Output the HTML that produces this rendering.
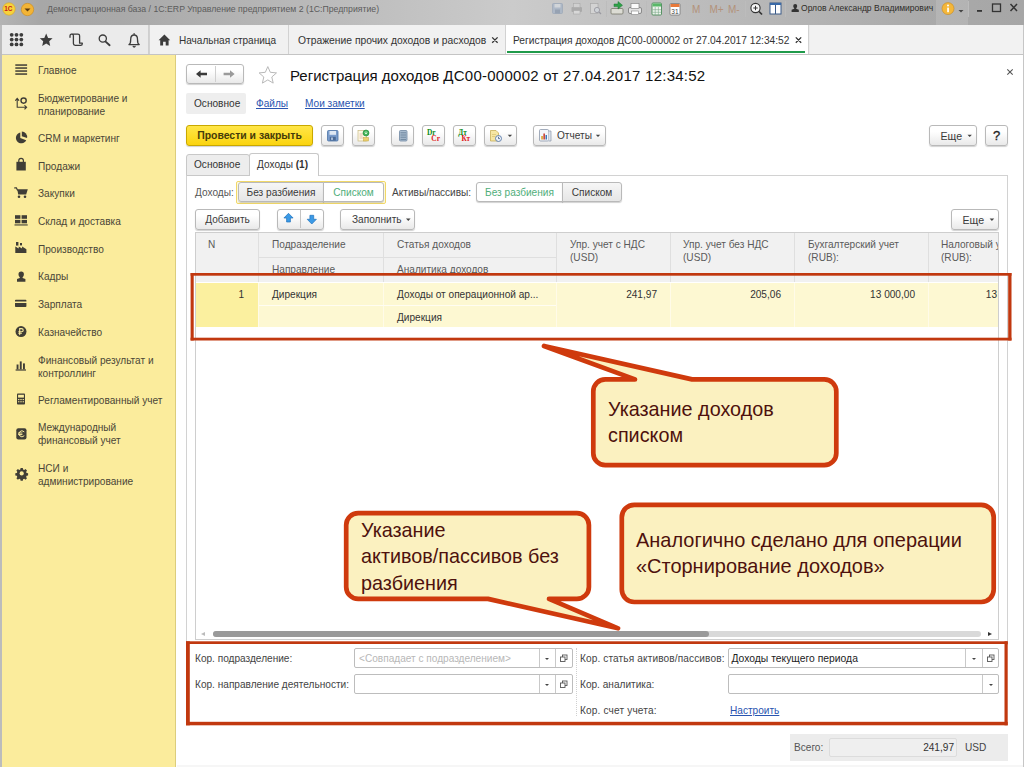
<!DOCTYPE html>
<html><head><meta charset="utf-8">
<style>
*{box-sizing:border-box;margin:0;padding:0}
html,body{width:1024px;height:767px;overflow:hidden;background:#fff;font-family:"Liberation Sans",sans-serif;font-size:10.1px;color:#3a3a3a}
div,span,svg{position:absolute}
.t{white-space:nowrap;line-height:13px}
#titlebar{left:0;top:0;width:1024px;height:25px;background:linear-gradient(90deg,#b4b4b4 0,#a7a7a7 4%,#a9a9a9 12%,#cbcbcb 50%,#aaaaaa 90%,#a6a6a6 100%)}
#toolrow{left:0;top:25px;width:1024px;height:30px;background:#ebebeb;border-bottom:1px solid #c4c4c4}
#leftedge{left:0;top:25px;width:2px;height:742px;background:#bcbcbc}
#rightedge{left:1023px;top:25px;width:1px;height:742px;background:#c6c6c6}
#sidebar{left:2px;top:55px;width:174px;height:712px;background:#fbec9c}
#sidebar .t{left:36px;color:#4a4638}
.tab{top:25px;height:29px;background:#f1f1f1;border-left:1px solid #d2d2d2;color:#333;line-height:31px;white-space:nowrap;font-size:10.2px}
.btn{height:21px;border:1px solid #b9b9b9;border-radius:3px;background:linear-gradient(#ffffff 30%,#e9e9e9);color:#3a3a3a;line-height:20px;text-align:center;white-space:nowrap;box-shadow:0 1px 1px rgba(0,0,0,.18)}
.hdr{color:#5a5a5a;white-space:nowrap;line-height:13px}
.cell{color:#333;white-space:nowrap;line-height:13px}
.inp{height:20px;border:1px solid #bdbdbd;border-radius:2px;background:#fff}
.vs{width:1px;background:#c6c6c6;top:0;height:18px}
.arr{width:0;height:0;border-left:2.5px solid transparent;border-right:2.5px solid transparent;border-top:2.5px solid #444;margin:.5px 0 0 .5px}
.co{font-size:19.8px;color:#4e110d;line-height:26.3px;white-space:nowrap}
</style></head><body>
<!-- TITLE BAR -->
<div id="titlebar">
 <svg style="left:2px;top:2px" width="40" height="16" viewBox="0 0 40 16">
  <circle cx="7" cy="7" r="6.2" fill="#f7d23c" stroke="#d9a520" stroke-width=".6"/>
  <text x="2.2" y="9.4" font-family="Liberation Sans" font-size="6.5" font-weight="bold" fill="#c8201a">1С</text>
  <circle cx="25.5" cy="7.5" r="6.2" fill="#f2b436" stroke="#c98a1d" stroke-width=".6"/>
  <path d="M22.5 6.5h6l-3 3z" fill="#5a3a10"/>
 </svg>
 <div class="t" style="left:47px;top:3px;font-size:8.72px;color:#5c5c5c">Демонстрационная база / 1С:ERP Управление предприятием 2 (1С:Предприятие)</div>
 
 <div style="left:936px;top:0;width:32px;height:25px;background:rgba(255,255,255,.13)"></div>
 <div class="t" style="left:801px;top:2px;font-size:8.55px;color:#2e2c28">Орлов Александр Владимирович</div>
</div>

<svg style="left:540px;top:0" width="484" height="25" viewBox="540 0 484 25">
 <g opacity=".45">
  <rect x="552.500" y="3.500" width="10" height="10" rx="1" fill="#8fa6c6" stroke="#6d86a8" stroke-width=".8"/><rect x="554.500" y="4" width="6" height="3.500" fill="#dfe6ef"/><rect x="555" y="9.500" width="5" height="4" fill="#5c769a"/>
  <rect x="571.500" y="7" width="10.500" height="5" rx="1" fill="#8a8a8a"/><rect x="573.500" y="3.500" width="6.500" height="4" fill="#ddd" stroke="#888" stroke-width=".6"/><rect x="573.500" y="10.500" width="6.500" height="3.500" fill="#eee" stroke="#888" stroke-width=".6"/>
  <rect x="590.500" y="3.500" width="7.500" height="10" fill="#e6e6e6" stroke="#888" stroke-width=".7"/><circle cx="597" cy="10" r="2.600" fill="#dde6f0" stroke="#667" stroke-width=".9"/><path d="M599 12 l2 2" stroke="#667" stroke-width="1.200"/>
 </g>
 <g stroke="#bcbcbc" stroke-width="1"><path d="M606.500 1 v16 M646.500 1 v16 M686.500 1 v16 M745.500 1 v16 M785.500 1 v16 M968.500 1 v16"/></g>
 <!-- send -->
 <rect x="611" y="8.500" width="12" height="5.500" rx="1" fill="#dcdcd4" stroke="#77776a" stroke-width=".8"/>
 <path d="M614 6.500 h4 v-2.500 l4.500 3.800 -4.500 3.800 v-2.500 h-4z" fill="#2fa048" stroke="#187830" stroke-width=".5" transform="translate(0,-2.500)"/>
 <!-- printer -->
 <rect x="628.500" y="7.500" width="13" height="6" rx="1.500" fill="#e4e4e4" stroke="#777" stroke-width=".8"/><rect x="631" y="3.500" width="8" height="5" fill="#fafafa" stroke="#888" stroke-width=".7"/><rect x="631.500" y="11" width="7" height="3.500" fill="#fff" stroke="#888" stroke-width=".6"/>
 <!-- calc -->
 <rect x="652" y="3" width="9.500" height="12" rx="1" fill="#eef4ee" stroke="#4a8a58" stroke-width=".9"/><rect x="652.500" y="3.500" width="8.500" height="3" fill="#58b868"/>
 <path d="M655.200 7 v8 M658.400 7 v8 M652.500 9.700 h8.500 M652.500 12.300 h8.500" stroke="#7aa888" stroke-width=".6"/>
 <!-- calendar -->
 <rect x="670" y="3.500" width="10" height="11.500" rx="1" fill="#fff" stroke="#777" stroke-width=".8"/><rect x="670.500" y="4" width="9" height="3" fill="#e8793a"/>
 <text x="671.300" y="13.600" font-family="Liberation Sans" font-size="6.500" fill="#444">31</text>
 <!-- M M+ M- -->
 <g font-family="Liberation Sans" font-size="10" fill="#b3927a"><text x="692" y="13">M</text><text x="709.500" y="13">M+</text><text x="728" y="13">M-</text></g>
 <!-- zoom -->
 <circle cx="755.500" cy="8" r="4.600" fill="#f6f6f6" stroke="#333" stroke-width="1.100"/><path d="M753.300 8 h4.400 M755.500 5.800 v4.400" stroke="#333" stroke-width="1"/><path d="M759 11.500 l3 3" stroke="#333" stroke-width="1.700"/>
 <!-- panels -->
 <rect x="770" y="3" width="11" height="11" fill="#fff" stroke="#3a5a88" stroke-width="1"/><rect x="770" y="3" width="11" height="2" fill="#3a6aa8"/><path d="M775.500 5 v9" stroke="#3a5a88" stroke-width="1"/>
 <!-- user -->
 <path d="M795.200 4 a2 2 0 0 1 2 2 c0 1 -.4 1.700 -1 2.200 v.6 l2.600 .9 v2.300 h-7.200 v-2.300 l2.600 -.9 v-.6 c-.6 -.5 -1 -1.200 -1 -2.200 a2 2 0 0 1 2 -2z" fill="#333"/>
 <!-- info -->
 <circle cx="948" cy="8.600" r="6" fill="#f4b73a" stroke="#c98a1d" stroke-width=".6"/>
 <rect x="947.200" y="7.600" width="1.700" height="4.600" fill="#fff"/><circle cx="948" cy="5.600" r="1" fill="#fff"/>
 <path d="M958.500 10 h5 l-2.500 2.600z" fill="#444"/>
 <rect x="977" y="10" width="5" height="1.800" fill="#333"/>
 <rect x="992.500" y="4" width="8" height="7.500" fill="none" stroke="#333" stroke-width="1.300"/>
 <path d="M1010.500 4 l6.500 7 M1017 4 l-6.500 7" stroke="#333" stroke-width="1.500"/>
</svg>
<div id="toolrow"></div>
<div id="leftedge"></div>
<div id="rightedge"></div>

<!-- TOOLROW ICONS -->
<svg style="left:0;top:25px" width="180" height="30" viewBox="0 0 180 30">
 <g fill="#3c3c3c">
  <g id="dots"><circle cx="11.7" cy="9.8" r="1.9"/><circle cx="16.5" cy="9.8" r="1.9"/><circle cx="21.3" cy="9.8" r="1.9"/>
  <circle cx="11.7" cy="14.6" r="1.9"/><circle cx="16.5" cy="14.6" r="1.9"/><circle cx="21.3" cy="14.6" r="1.9"/>
  <circle cx="11.7" cy="19.4" r="1.9"/><circle cx="16.5" cy="19.4" r="1.9"/><circle cx="21.3" cy="19.4" r="1.9"/></g>
  <path d="M46.2 8.6 l1.9 4.3 4.5 .4 -3.4 3 1 4.6 -4 -2.5 -4 2.5 1 -4.6 -3.4 -3 4.5 -.4z"/>
 </g>
 <g fill="none" stroke="#3c3c3c" stroke-width="1.3" stroke-linecap="round" stroke-linejoin="round">
  <path d="M70 12.3 V10.8 a1.7 1.7 0 0 1 3.4 0 V18.6 a1.8 1.8 0 0 0 1.8 1.8 H80.6 a1.7 1.7 0 0 0 1.7 -1.7 V18.2 H79.6 V10.8 a1.7 1.7 0 0 0 -1.7 -1.7 H71.8"/>
  <circle cx="102.8" cy="13.6" r="3.6"/>
  <path d="M105.6 16.6 L109.6 20.2" stroke-width="1.9"/>
  <path d="M129 19.6 h10.2 c-1.5 -1 -1.7 -2.6 -1.7 -5.2 c0 -2.8 -1.4 -4.4 -3.4 -4.4 s-3.4 1.6 -3.4 4.4 c0 2.6 -.2 4.2 -1.7 5.2z M133.2 21.3 a1 1 0 0 0 1.9 0 M134.1 9.6 V8.6"/>
 </g>
</svg>
<div style="left:148px;top:25px;width:1px;height:29px;background:#cfcfcf"></div>
<div style="left:810px;top:25px;width:213px;height:29px;background:#f2f2f2"></div>
<!-- TABS -->
<div class="tab" style="left:149px;width:139px;padding-left:29px;font-size:10.05px">Начальная страница</div>
<div class="tab" style="left:288px;width:217px;padding-left:9px;font-size:10.32px">Отражение прочих доходов и расходов</div>
<div class="tab" style="left:505px;width:304px;padding-left:7px;font-size:10.2px;background:#fff;border-right:1px solid #d2d2d2">Регистрация доходов ДС00-000002 от 27.04.2017 12:34:52</div>
<div style="left:507px;top:50.5px;width:298px;height:2.5px;background:#1f9a4a"></div>
<svg style="left:0;top:25px" width="180" height="30" viewBox="0 0 180 30"><g fill="#3c3c3c"><path d="M158.6 15.2 L164.4 9.6 L170.2 15.2 H168.6 V20.4 H165.7 V16.8 H163.1 V20.4 H160.2 V15.2 Z"/></g></svg>
<!-- SIDEBAR -->
<div id="sidebar">
<div class="t" style="top:8.8px">Главное</div>
<div class="t" style="top:36.8px">Бюджетирование и<br>планирование</div>
<div class="t" style="top:76.8px">CRM и маркетинг</div>
<div class="t" style="top:104.8px">Продажи</div>
<div class="t" style="top:131.8px">Закупки</div>
<div class="t" style="top:159.8px">Склад и доставка</div>
<div class="t" style="top:187.8px">Производство</div>
<div class="t" style="top:214.8px">Кадры</div>
<div class="t" style="top:242.8px">Зарплата</div>
<div class="t" style="top:270.8px">Казначейство</div>
<div class="t" style="top:298.8px">Финансовый результат и<br>контроллинг</div>
<div class="t" style="top:338.8px">Регламентированный учет</div>
<div class="t" style="top:366.3px">Международный<br>финансовый учет</div>
<div class="t" style="top:406.8px">НСИ и<br>администрирование</div>
</div>

<svg style="left:0;top:0" width="40" height="500" viewBox="0 0 40 500">
 <g fill="#403e36">
  <!-- hamburger -->
  <rect x="15.3" y="64.3" width="11.8" height="1.5"/><rect x="15.3" y="67.3" width="11.8" height="1.5"/><rect x="15.3" y="70.3" width="11.8" height="1.5"/><rect x="15.3" y="73.3" width="11.8" height="1.5"/>
  <!-- pie -->
  <path d="M20.3 132.6 a5.4 5.4 0 1 0 5.9 7.6 l-5.9 -2.2z"/><path d="M21.8 131.6 a5.6 5.6 0 0 1 5.3 6.4 l-5.3 -1.7z"/>
  <!-- bag -->
  <path d="M16.4 161.8 h9.4 v8.7 h-9.4z"/>
  <!-- cart -->
  <path d="M17.2 189.2 h10.6 l-1.6 5.2 h-8z"/><circle cx="19" cy="196.8" r="1.3"/><circle cx="25" cy="196.8" r="1.3"/>
  <!-- warehouse -->
  <rect x="15" y="215.2" width="5.4" height="3.6"/><rect x="21.6" y="215.2" width="5.4" height="3.6"/><rect x="15" y="219.9" width="5.4" height="3.4"/><rect x="21.6" y="219.9" width="5.4" height="3.4"/><rect x="14.5" y="224.4" width="13.2" height="1.1"/>
  <!-- factory -->
  <path d="M15.3 253 v-6.6 l3.4 2.2 v-2.2 l3.4 2.2 v-2.2 l4.3 2.8 v3.8z"/><rect x="16" y="242" width="2.4" height="3.6"/><rect x="20" y="243" width="2" height="2.4"/>
  <!-- person -->
  <path d="M21.2 271.6 a2.7 2.7 0 0 1 2.7 2.7 c0 1.4 -.6 2.4 -1.3 3 v.8 l2.8 1 v2.7 h-8.4 v-2.7 l2.8 -1 v-.8 c-.7 -.6 -1.3 -1.6 -1.3 -3 a2.7 2.7 0 0 1 2.7 -2.7z"/>
  <!-- card -->
  <path d="M15 300.5 a.8 .8 0 0 1 .8 -.8 h9.8 a.8 .8 0 0 1 .8 .8 v1 h-11.4z M15 303 h11.400 v3.2 a.8 .8 0 0 1 -.8 .8 h-9.8 a.8 .8 0 0 1 -.8 -.8z"/>
  <!-- ruble -->
  <circle cx="21" cy="331.6" r="5.5"/>
  <!-- bars -->
  <rect x="15.6" y="369.4" width="10.4" height="1.2"/><rect x="16.6" y="364.5" width="1.9" height="4.9"/><rect x="19.8" y="361.4" width="1.9" height="8"/><rect x="23" y="363.4" width="1.9" height="6"/>
  <!-- calc -->
  <path d="M17 394.4 a.8 .8 0 0 1 .8 -.8 h6.400 a.8 .8 0 0 1 .8 .8 v9.3 a.8 .8 0 0 1 -.8 .8 h-6.400 a.8 .8 0 0 1 -.8 -.8z"/>
  <!-- euro -->
  <rect x="16.3" y="428.2" width="10.2" height="11.2" rx="2"/>
  <!-- gear -->
  <path d="M20.600 468 h2.200 l.3 1.500 1.100 .5 1.300 -.9 1.500 1.500 -.9 1.300 .5 1.100 1.500 .3 v2.200 l-1.500 .3 -.5 1.100 .9 1.300 -1.500 1.500 -1.300 -.9 -1.100 .5 -.3 1.500 h-2.200 l-.3 -1.500 -1.100 -.5 -1.300 .9 -1.500 -1.500 .9 -1.300 -.5 -1.100 -1.500 -.3 v-2.200 l1.500 -.3 .5 -1.100 -.9 -1.300 1.500 -1.500 1.300 .9 1.100 -.5z"/>
 </g>
 <g fill="#fbec9c">
  <circle cx="21.7" cy="473.4" r="2.1"/>
  <rect x="18.100" y="394.800" width="5.800" height="2.800"/>
  <rect x="18.1" y="399" width="1.300" height="1.100"/><rect x="20.35" y="399" width="1.300" height="1.100"/><rect x="22.600" y="399" width="1.300" height="1.100"/>
  <rect x="18.1" y="401.200" width="1.300" height="1.100"/><rect x="20.35" y="401.200" width="1.300" height="1.100"/><rect x="22.600" y="401.200" width="1.300" height="1.100"/>
 </g>
 <g fill="none" stroke="#403e36" stroke-linecap="round">
  <path d="M18.800 162 v-1.400 a2.300 2.300 0 0 1 4.600 0 v1.400" stroke-width="1.200"/>
  <path d="M14.700 187.900 h1.700 l1 2.200" stroke-width="1.200"/>
  <!-- budget icon -->
  <path d="M17.200 98.500 V107.300 H26.500 M15.600 100.300 l1.600 -1.900 1.600 1.900 M24.800 105.600 l1.800 1.700 -1.800 1.700" stroke-width="1.100"/>
  <circle cx="23.600" cy="100.600" r="2.600" stroke-width="1.400"/>
 </g>
 <g fill="none" stroke="#fbec9c" stroke-width="1.100" stroke-linecap="round">
  <path d="M19.700 334.600 v-6 h1.900 a1.600 1.600 0 0 1 0 3.200 h-2.800 M18.800 333.300 h2.600"/>
  <path d="M24 431.600 a3 3 0 1 0 0 4.400 M18.600 433 h3.400 M18.600 434.600 h3.400" stroke-width="1"/>
 </g>
</svg>
<div style="left:175px;top:55px;width:1px;height:712px;background:#dccd7c"></div>
<div style="left:177px;top:764.5px;width:846px;height:2.5px;background:#f6f6f6"></div>
<!-- CONTENT HEADER -->
<div class="btn" style="left:186px;top:64px;width:58px;height:20px"></div>
<div style="left:215px;top:66px;width:1px;height:16px;background:#d0d0d0"></div>
<div class="t" style="left:290px;top:67px;font-size:15px;line-height:18px;color:#111">Регистрация доходов <span style="position:static;letter-spacing:.25px">ДС00-000002 от 27.04.2017 12:34:52</span></div>
<div style="left:186px;top:93px;width:60px;height:21px;background:#eeeeee;border-radius:2px"></div>
<div class="t" style="left:194px;top:97px;color:#333">Основное</div>
<div class="t" style="left:256px;top:97px;color:#2a55b0;text-decoration:underline">Файлы</div>
<div class="t" style="left:305px;top:97px;color:#2a55b0;text-decoration:underline">Мои заметки</div>
<!-- COMMAND BAR -->
<div class="btn" style="left:186px;top:125px;width:127px;background:linear-gradient(#ffe648,#fbd40f);border-color:#c9a800;font-weight:bold;font-size:10.45px;color:#453b0a">Провести и закрыть</div>
<div class="btn" style="left:321px;top:125px;width:23px"></div>
<div class="btn" style="left:352px;top:125px;width:23px"></div>
<div class="btn" style="left:391px;top:125px;width:23px"></div>
<div class="btn" style="left:422px;top:125px;width:23px"></div>
<div class="btn" style="left:453px;top:125px;width:23px"></div>
<div class="btn" style="left:484px;top:125px;width:33px"></div>
<div class="btn" style="left:533px;top:125px;width:73px;text-align:left;padding-left:23px">Отчеты</div>
<div class="btn" style="left:929px;top:125px;width:48px;text-align:left;padding-left:10.5px;font-size:10.6px">Еще</div>
<div class="btn" style="left:985px;top:125px;width:23px;font-size:13px;color:#222;-webkit-text-stroke:.3px #222">?</div>

<!-- PAGE TABS -->
<div style="left:186px;top:175px;width:822px;height:470px;border:1px solid #d2d2d2;border-bottom:none;background:#fff"></div>
<div style="left:186px;top:154px;width:64px;height:22px;background:#ededed;border:1px solid #c8c8c8;border-radius:3px 3px 0 0"></div>
<div class="t" style="left:194px;top:158px;color:#333">Основное</div>
<div style="left:249px;top:153px;width:70px;height:23px;background:#fff;border:1px solid #c8c8c8;border-bottom:none;border-radius:3px 3px 0 0"></div>
<div class="t" style="left:257px;top:158px;color:#333">Доходы <b>(1)</b></div>
<!-- SWITCHES -->
<div class="t" style="left:195px;top:186px;color:#555">Доходы:</div>
<div style="left:236px;top:181px;width:150px;height:22.5px;border:1px solid #f1d868;border-radius:2px;background:#fffbe0"></div>
<div class="btn" style="left:238px;top:182px;width:86px;height:20px;border-radius:3px 0 0 3px;line-height:19px;background:linear-gradient(#f6f6f6,#e6e6e6)">Без разбиения</div>
<div class="btn" style="left:323px;top:182px;width:61px;height:20px;border-radius:0 3px 3px 0;line-height:19px;background:#fff;color:#4fae7a">Списком</div>
<div class="t" style="left:392px;top:186px;color:#444">Активы/пассивы:</div>
<div class="btn" style="left:476px;top:182px;width:87px;height:20px;border-radius:3px 0 0 3px;line-height:19px;background:#fff;color:#4fae7a">Без разбиения</div>
<div class="btn" style="left:562px;top:182px;width:60px;height:20px;border-radius:0 3px 3px 0;line-height:19px;background:linear-gradient(#f6f6f6,#e6e6e6)">Списком</div>
<!-- TABLE CMD -->
<div class="btn" style="left:195px;top:209px;width:65px;height:20.5px;line-height:20px">Добавить</div>
<div class="btn" style="left:277px;top:209px;width:47px;height:20.5px"></div>
<div style="left:300px;top:210px;width:1px;height:18px;background:#c4c4c4"></div>
<div class="btn" style="left:340px;top:209px;width:75px;height:20.5px;line-height:20px;text-align:left;padding-left:11px">Заполнить</div>
<div class="btn" style="left:951px;top:209px;width:48px;height:20.5px;line-height:20px;text-align:left;padding-left:10.5px;font-size:10.6px">Еще</div>
<!-- TABLE -->
<div id="table" style="left:195px;top:232px;width:804px;height:408px;border:1px solid #cecece;background:#fff"></div>
<div style="left:196px;top:233px;width:802px;height:49px;background:#f1f1f1"></div>

<!-- header grid lines -->
<div style="left:258px;top:233px;width:1px;height:49px;background:#dfdfdf"></div>
<div style="left:383px;top:233px;width:1px;height:49px;background:#dfdfdf"></div>
<div style="left:556px;top:233px;width:1px;height:49px;background:#dfdfdf"></div>
<div style="left:670px;top:233px;width:1px;height:49px;background:#dfdfdf"></div>
<div style="left:794px;top:233px;width:1px;height:49px;background:#dfdfdf"></div>
<div style="left:928px;top:233px;width:1px;height:49px;background:#dfdfdf"></div>
<div style="left:259px;top:257px;width:297px;height:1px;background:#dfdfdf"></div>
<div class="hdr" style="left:208px;top:238px">N</div>
<div class="hdr" style="left:272px;top:238px">Подразделение</div>
<div class="hdr" style="left:272px;top:263px">Направление</div>
<div class="hdr" style="left:397px;top:238px">Статья доходов</div>
<div class="hdr" style="left:397px;top:263px">Аналитика доходов</div>
<div class="hdr" style="left:570px;top:238px">Упр. учет с НДС<br>(USD)</div>
<div class="hdr" style="left:683px;top:238px">Упр. учет без НДС<br>(USD)</div>
<div class="hdr" style="left:808px;top:238px">Бухгалтерский учет<br>(RUB):</div>
<div class="hdr" style="left:941px;top:238px;width:57px;overflow:hidden">Налоговый учет<br>(RUB):</div>
<!-- data row -->
<div style="left:196px;top:283px;width:802px;height:44px;background:#fdf8d2"></div>
<div style="left:196px;top:283px;width:61.5px;height:44px;background:#fbf09f"></div>
<div style="left:258px;top:283px;width:1px;height:44px;background:#fffbe8"></div>
<div style="left:383px;top:283px;width:1px;height:44px;background:#fffbe8"></div>
<div style="left:556px;top:283px;width:1px;height:44px;background:#fffbe8"></div>
<div style="left:670px;top:283px;width:1px;height:44px;background:#fffbe8"></div>
<div style="left:794px;top:283px;width:1px;height:44px;background:#fffbe8"></div>
<div style="left:928px;top:283px;width:1px;height:44px;background:#fffbe8"></div>
<div style="left:259px;top:304.5px;width:297px;height:1px;background:#fffdf2"></div>
<div class="cell" style="left:200px;top:287.5px;width:44px;text-align:right">1</div>
<div class="cell" style="left:272px;top:287.5px">Дирекция</div>
<div class="cell" style="left:397px;top:287.5px">Доходы от операционной ар...</div>
<div class="cell" style="left:397px;top:310.5px">Дирекция</div>
<div class="cell" style="left:580px;top:287.5px;width:77px;text-align:right">241,97</div>
<div class="cell" style="left:700px;top:287.5px;width:81px;text-align:right">205,06</div>
<div class="cell" style="left:830px;top:287.5px;width:85px;text-align:right">13 000,00</div>
<div class="cell" style="left:960px;top:287.5px;width:37px;text-align:right">13</div>
<!-- scrollbar -->
<div style="left:196px;top:630px;width:802px;height:9px;background:#fff"></div>
<div style="left:213px;top:631px;width:768px;height:6px;background:#d9d9d9;border-radius:3px"></div>
<div style="left:213px;top:631px;width:496px;height:6px;background:#9a9a9a;border-radius:3px"></div>
<div style="left:201px;top:632px;width:0;height:0;border-top:2.5px solid transparent;border-bottom:2.5px solid transparent;border-right:4px solid #bbb"></div>
<div style="left:988px;top:632px;width:0;height:0;border-top:2.5px solid transparent;border-bottom:2.5px solid transparent;border-left:4px solid #333"></div>
<!-- BOTTOM FIELDS -->
<div style="left:576px;top:648px;width:0;height:68px;border-left:1px dotted #d0d0d0"></div>
<div class="t" style="left:195px;top:652px;color:#444">Кор. подразделение:</div>
<div class="t" style="left:195px;top:678px;color:#444">Кор. направление деятельности:</div>
<div class="inp" style="left:354px;top:648px;width:219px"></div>
<div class="t" style="left:359px;top:652px;color:#b8b8b8">&lt;Совпадает с подразделением&gt;</div>
<div style="left:539px;top:649px;width:1px;height:18px;background:#c9c9c9"></div>
<div style="left:555px;top:649px;width:1px;height:18px;background:#c9c9c9"></div>
<div class="arr" style="left:544px;top:657px"></div>
<div class="inp" style="left:354px;top:674px;width:219px"></div>
<div style="left:539px;top:675px;width:1px;height:18px;background:#c9c9c9"></div>
<div style="left:555px;top:675px;width:1px;height:18px;background:#c9c9c9"></div>
<div class="arr" style="left:544px;top:683px"></div>
<div class="t" style="left:580px;top:652px;color:#444;letter-spacing:.12px">Кор. статья активов/пассивов:</div>
<div class="t" style="left:580px;top:678px;color:#444">Кор. аналитика:</div>
<div class="t" style="left:580px;top:704px;color:#444;letter-spacing:.16px">Кор. счет учета:</div>
<div class="inp" style="left:728px;top:648px;width:271px"></div>
<div class="t" style="left:731.5px;top:652px;color:#222;font-size:10.35px">Доходы текущего периода</div>
<div style="left:965px;top:649px;width:1px;height:18px;background:#c9c9c9"></div>
<div style="left:982px;top:649px;width:1px;height:18px;background:#c9c9c9"></div>
<div class="arr" style="left:971px;top:657px"></div>
<div class="inp" style="left:728px;top:674px;width:271px"></div>
<div style="left:982px;top:675px;width:1px;height:18px;background:#c9c9c9"></div>
<div class="arr" style="left:988px;top:683px"></div>
<div class="t" style="left:730px;top:704px;color:#2a55b0;text-decoration:underline">Настроить</div>
<!-- TOTAL -->
<div style="left:790px;top:734px;width:218px;height:27px;background:#ececec"></div>
<div class="t" style="left:794px;top:741px;color:#555">Всего:</div>
<div style="left:829px;top:738px;width:128px;height:19px;background:#efefef;border:1px solid #dcdcdc;border-radius:2px"></div>
<div class="t" style="left:880px;top:741px;width:74px;text-align:right;color:#333">241,97</div>
<div class="t" style="left:965px;top:741px;color:#444">USD</div>
<!-- CONTENT ICONS -->
<svg style="left:0;top:0" width="1024" height="240" viewBox="0 0 1024 240">
 <!-- nav arrows -->
 <path d="M196 74 l4.600 -3.800 v2.600 h6.400 v2.400 h-6.400 v2.600z" fill="#3a3a3a"/>
 <path d="M234.600 74 l-4.600 -3.800 v2.600 h-6.400 v2.400 h6.400 v2.600z" fill="#9a9a9a"/>
 <!-- star -->
 <path d="M267.800 66.600 l2.500 5.700 6.200 .6 -4.700 4.100 1.400 6.100 -5.400 -3.200 -5.400 3.200 1.400 -6.100 -4.700 -4.100 6.200 -.6z" fill="#fff" stroke="#b9b9b9" stroke-width="1"/>
 <!-- close x -->
 <path d="M1007.300 69.300 l5.400 5.400 M1012.700 69.300 l-5.400 5.400" stroke="#555" stroke-width="1.100"/>
 <!-- tab close x -->
 <path d="M492.200 37.400 l5.400 5.400 M497.600 37.400 l-5.400 5.400 M795.800 37.400 l5.400 5.400 M801.200 37.400 l-5.400 5.400" stroke="#333" stroke-width="1.300"/>
 <!-- save -->
 <rect x="327.500" y="130.500" width="10.500" height="10.500" rx="1" fill="#7a9ccb" stroke="#4d73a6" stroke-width=".8"/>
 <rect x="329.500" y="131" width="6.500" height="3.800" fill="#dfe8f3"/><rect x="329.800" y="136.800" width="6" height="3.800" fill="#4a6a96"/><rect x="331.200" y="137.500" width="1.600" height="2.400" fill="#c4d2e6"/>
 <!-- doc green -->
 <rect x="358" y="130.500" width="8.500" height="10.500" fill="#fdf8e4" stroke="#c8ba84" stroke-width=".7"/>
 <path d="M359.500 134 h3.500 M359.500 136 h3 M359.500 138 h3.500" stroke="#d89a8a" stroke-width=".6"/>
 <circle cx="366" cy="133" r="3" fill="#3cb054" stroke="#228a38" stroke-width=".6"/>
 <path d="M364.600 132.600 l1.400 1.500 1.400 -1.500 M366 131.300 v2.600" stroke="#eaffea" stroke-width=".8" fill="none"/>
 <rect x="363.500" y="137.500" width="5" height="3.500" fill="#ecd070" stroke="#c0a440" stroke-width=".5"/>
 <!-- list doc -->
 <rect x="399.500" y="130.500" width="7.500" height="10.500" rx="1" fill="#a9bccf" stroke="#7088a2" stroke-width=".8"/>
 <path d="M400.500 132.800 h5.500 M400.500 135 h5.500 M400.500 137.200 h5.500 M400.500 139.400 h5.500" stroke="#5f7892" stroke-width=".8"/>
 <!-- DtCr -->
 <text x="427" y="135.300" font-family="Liberation Serif" font-weight="bold" font-size="7.400" fill="#0c8a14">Dr</text>
 <text x="431.300" y="140.900" font-family="Liberation Serif" font-weight="bold" font-size="7.400" fill="#e0181a">Cr</text>
 <text x="458.200" y="135.300" font-family="Liberation Serif" font-weight="bold" font-size="7.200" fill="#0c8a14">Дт</text>
 <text x="461.500" y="140.900" font-family="Liberation Serif" font-weight="bold" font-size="7.200" fill="#e0181a">Кт</text>
 <!-- doc clock -->
 <path d="M490.500 130.500 h5.500 l2.500 2.500 v8 h-8z" fill="#f6e7a4" stroke="#c8ae58" stroke-width=".8"/>
 <path d="M492 134.500 h4 M492 136.500 h3" stroke="#d8c070" stroke-width=".7"/>
 <circle cx="498.500" cy="138.500" r="3" fill="#eef3fa" stroke="#5878a6" stroke-width=".9"/>
 <path d="M498.500 136.800 v1.800 h1.400" stroke="#33507a" stroke-width=".8" fill="none"/>
 <path d="M507.700 134.700 h4.400 l-2.200 2.400z" fill="#444"/>
 <!-- reports icon -->
 <rect x="539.500" y="129.500" width="9" height="11.500" rx="1" fill="#f4f6fa" stroke="#8a97aa" stroke-width=".8"/>
 <path d="M548.500 131 h2.500 v10 h-2.500" fill="#dde3ec" stroke="#8a97aa" stroke-width=".7"/>
 <rect x="541.300" y="136" width="1.500" height="3.500" fill="#d4a020"/><rect x="543.400" y="133.500" width="1.500" height="6" fill="#c8382a"/><rect x="545.500" y="135" width="1.500" height="4.500" fill="#3f78b8"/>
 <path d="M595.800 134.700 h4.400 l-2.200 2.400z" fill="#444"/>
 <path d="M967.500 134.700 h4.400 l-2.200 2.400z" fill="#444"/>
 <!-- up/down -->
 <path d="M288.500 213.300 l4.600 4.700 h-2.700 v4 h-3.800 v-4 h-2.700z" fill="#3b9ae6" stroke="#2173bd" stroke-width=".7"/>
 <path d="M311.800 224 l4.600 -4.700 h-2.700 v-4 h-3.800 v4 h-2.700z" fill="#3b9ae6" stroke="#2173bd" stroke-width=".7"/>
 <path d="M406 218.600 h4.600 l-2.300 2.500z" fill="#444"/>
 <path d="M989.600 218.600 h4.600 l-2.300 2.500z" fill="#444"/>
</svg>
<!-- open buttons in inputs -->
<svg style="left:0;top:640px" width="1024" height="60" viewBox="0 0 1024 60">
 <g fill="#fff" stroke="#555" stroke-width=".9">
  <rect x="562.500" y="15" width="4.500" height="4.500"/><rect x="560.500" y="17" width="4.500" height="4.500"/>
  <rect x="562.500" y="41" width="4.500" height="4.500"/><rect x="560.500" y="43" width="4.500" height="4.500"/>
  <rect x="989.500" y="15" width="4.500" height="4.500"/><rect x="987.500" y="17" width="4.500" height="4.500"/>
 </g>
</svg>
<!-- RED BOXES -->
<!-- CALLOUTS -->
<svg style="left:0;top:0" width="1024" height="767" viewBox="0 0 1024 767">
 <g fill="#c1380f">
  <!-- box1: L190.6 T273 R1012 B340.6 -->
  <rect x="190.600" y="273" width="820.900" height="2.700"/><rect x="190.600" y="337.700" width="820.900" height="2.800"/>
  <rect x="190.600" y="273" width="3.100" height="67.500"/><rect x="1008.200" y="273" width="3.300" height="67.500"/>
  <!-- box2: L186 T641.3 R1007.7 B725.3 -->
  <rect x="186" y="641.300" width="821.700" height="2.700"/><rect x="186" y="721.800" width="821.700" height="3.500"/>
  <rect x="186" y="641.300" width="3.800" height="84"/><rect x="1004.500" y="641.300" width="3.200" height="84"/>
 </g>
 <g fill="#fbf1c0" stroke="#cf3a0d" stroke-width="4.700" stroke-linejoin="round" stroke-linecap="round">
  <path d="M544 346 L692 379.400 H824.300 a12 12 0 0 1 12 12 V453.200 a12 12 0 0 1 -12 12 H605.300 a12 12 0 0 1 -12 -12 V391.400 a12 12 0 0 1 12 -12 H635 Z"/>
  <path d="M358.200 513.100 H576.900 a12 12 0 0 1 12 12 V586.900 a12 12 0 0 1 -12 12 H549 L618 628.300 L488 598.900 H358.200 a12 12 0 0 1 -12 -12 V525.100 a12 12 0 0 1 12 -12 Z"/>
  <rect x="621.800" y="504.800" width="371.900" height="97.200" rx="12.500" ry="12.500"/>
 </g>
</svg>
<div class="co" style="left:608px;top:395.5px">Указание доходов<br>списком</div>
<div class="co" style="left:361px;top:516.5px;line-height:26.5px">Указание<br>активов/пассивов без<br>разбиения</div>
<div class="co" style="left:636px;top:528.3px;line-height:25.5px;font-size:19.97px">Аналогично сделано для операции<br>«Сторнирование доходов»</div>
</body></html>
